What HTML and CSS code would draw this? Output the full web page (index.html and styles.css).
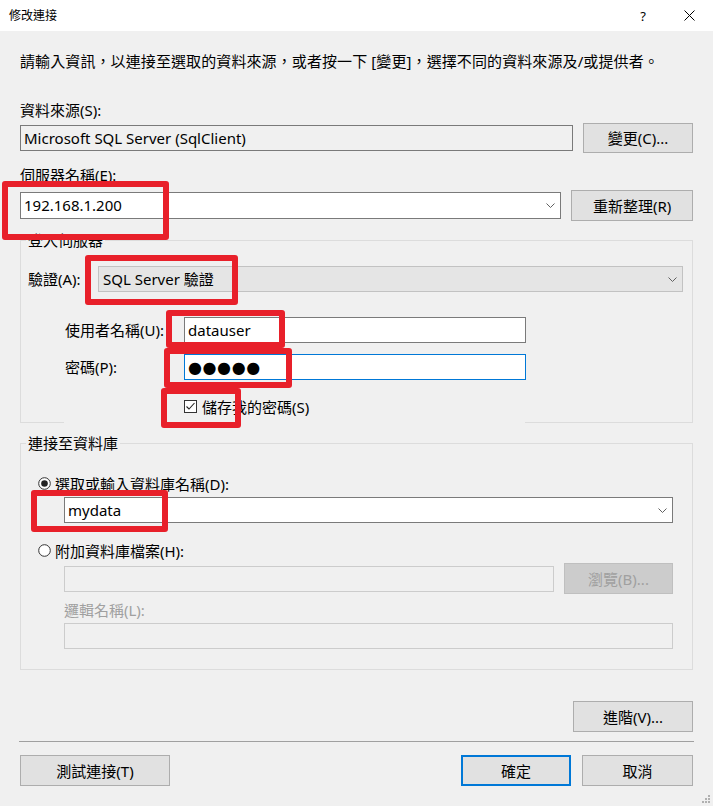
FILE: index.html
```html
<!DOCTYPE html>
<html lang="zh-Hant">
<head>
<meta charset="utf-8">
<title>修改連接</title>
<link rel="stylesheet" href="styles.css">
</head>
<body>
<div class="dialog">
  <header class="titlebar">
    <span class="title">修改連接</span>
    <div class="caption-btns">
      <span class="help">?</span>
      <svg class="close" width="11" height="11" viewBox="0 0 11 11"><path d="M0.5 0.5 L10.5 10.5 M10.5 0.5 L0.5 10.5" stroke="#000" stroke-width="1" fill="none"/></svg>
    </div>
  </header>

  <main class="content">
    <p class="intro">請輸入資訊，以連接至選取的資料來源，或者按一下 [變更]，選擇不同的資料來源及/或提供者。</p>

    <div class="label l-source">資料來源(S):</div>
    <div class="row r-source">
      <div class="textbox readonly w-source">Microsoft SQL Server (SqlClient)</div>
      <button class="btn btn-change">變更(C)...</button>
    </div>

    <div class="label l-server">伺服器名稱(E):</div>
    <div class="row r-server">
      <div class="combo w-server"><span class="val">192.168.1.200</span><svg class="chev" width="9" height="5" viewBox="0 0 9 5"><polyline points="0.5,0.5 4.5,4.5 8.5,0.5" fill="none" stroke="#606060" stroke-width="1"/></svg></div>
      <button class="btn btn-refresh">重新整理(R)</button>
    </div>

    <fieldset class="group g-login">
      <legend>登入伺服器</legend>
      <div class="auth-row">
        <span class="auth-label">驗證(A):</span>
        <div class="combo dropdown"><span class="val">SQL Server 驗證</span><svg class="chev" width="9" height="5" viewBox="0 0 9 5"><polyline points="0.5,0.5 4.5,4.5 8.5,0.5" fill="none" stroke="#606060" stroke-width="1"/></svg></div>
      </div>
      <div class="cred">
        <div class="cred-row r-user">
          <span class="cred-label">使用者名稱(U):</span>
          <div class="textbox cred-box">datauser</div>
        </div>
        <div class="cred-row r-pass">
          <span class="cred-label">密碼(P):</span>
          <div class="textbox cred-box focused"><span class="dots">●●●●●</span></div>
        </div>
        <div class="check">
          <svg class="checkbox" width="13" height="13" viewBox="0 0 13 13"><rect x="0.5" y="0.5" width="12" height="12" fill="#fff" stroke="#333" stroke-width="1"/><polyline points="2.5,6.5 5,9 10.5,3" fill="none" stroke="#222" stroke-width="1.1"/></svg>
          <span>儲存我的密碼(S)</span>
        </div>
      </div>
      <div class="group-foot"><span class="seg seg-left"></span><span class="seg-gap"></span><span class="seg seg-right"></span></div>
    </fieldset>

    <fieldset class="group g-db">
      <legend>連接至資料庫</legend>
      <div class="db-body">
        <div class="radio-row r-radio1">
          <svg class="radio" width="13" height="13" viewBox="0 0 13 13"><circle cx="6.5" cy="6.5" r="5.8" fill="#fff" stroke="#333" stroke-width="1"/><circle cx="6.5" cy="6.5" r="3.3" fill="#222"/></svg>
          <span>選取或輸入資料庫名稱(D):</span>
        </div>
        <div class="combo w-db"><span class="val">mydata</span><svg class="chev" width="9" height="5" viewBox="0 0 9 5"><polyline points="0.5,0.5 4.5,4.5 8.5,0.5" fill="none" stroke="#606060" stroke-width="1"/></svg></div>
        <div class="radio-row r-radio2">
          <svg class="radio" width="13" height="13" viewBox="0 0 13 13"><circle cx="6.5" cy="6.5" r="5.8" fill="#fff" stroke="#333" stroke-width="1"/></svg>
          <span>附加資料庫檔案(H):</span>
        </div>
        <div class="attach-row">
          <div class="textbox disabled w-attach"></div>
          <button class="btn btn-disabled btn-browse">瀏覽(B)...</button>
        </div>
        <div class="label disabled-label l-logical">邏輯名稱(L):</div>
        <div class="textbox disabled w-logical"></div>
      </div>
    </fieldset>

    <div class="adv-row"><button class="btn btn-adv">進階(V)...</button></div>
    <div class="separator"></div>
    <div class="footer">
      <button class="btn btn-test">測試連接(T)</button>
      <div class="footer-right">
        <button class="btn btn-ok">確定</button>
        <button class="btn btn-cancel">取消</button>
      </div>
    </div>
  </main>

  <svg class="grip" width="8" height="8" viewBox="0 0 8 8"><rect x="6" y="0" width="2" height="2" fill="#b0b0b0"/><rect x="3" y="3" width="2" height="2" fill="#b0b0b0"/><rect x="6" y="3" width="2" height="2" fill="#b0b0b0"/><rect x="0" y="6" width="2" height="2" fill="#b0b0b0"/><rect x="3" y="6" width="2" height="2" fill="#b0b0b0"/><rect x="6" y="6" width="2" height="2" fill="#b0b0b0"/></svg>

  <div class="mark mark-server"></div>
  <div class="mark mark-auth"></div>
  <div class="mark mark-user"></div>
  <div class="mark mark-pass"></div>
  <div class="mark mark-check"></div>
  <div class="mark mark-db"></div>
</div>
</body>
</html>
```

FILE: styles.css
```css
* { box-sizing: border-box; }
html, body { margin: 0; padding: 0; }
body {
  background: #f0f0f0;
  font-family: "Noto Sans", "Noto Sans CJK TC", sans-serif;
  font-size: 15px;
  color: #000;
}
.dialog {
  position: relative;
  width: 713px;
  height: 806px;
  background: #f0f0f0;
  overflow: hidden;
}
.titlebar {
  height: 31px;
  background: #fff;
  display: flex;
  align-items: center;
  justify-content: space-between;
  padding: 0 18px 0 9px;
}
.title { font-size: 12px; line-height: 16px; }
.caption-btns { display: flex; align-items: center; gap: 38px; }
.help { font-size: 13px; line-height: 16px; }
.close { display: block; }

.content { padding: 0 20px; }
.intro {
  margin: 20px 0 0;
  line-height: 20px;
  white-space: nowrap;
  letter-spacing: 0.1px;
}
.label { line-height: 20px; }
.l-source { margin-top: 29px; }
.l-server { margin-top: 12px; }
.row { display: flex; align-items: center; gap: 10px; }
.r-source { margin-top: 3px; height: 30px; }
.r-server { margin-top: 5px; height: 31px; }

.textbox {
  height: 26px;
  background: #fff;
  border: 1px solid #7a7a7a;
  padding: 0 3px;
  line-height: 24px;
  white-space: nowrap;
  overflow: hidden;
}
.textbox.readonly { background: #f0f0f0; }
.textbox.disabled { background: #f0f0f0; border-color: #cccccc; }
.textbox.focused { border-color: #0078d7; }
.w-source { width: 553px; }

.combo {
  height: 27px;
  background: #fff;
  border: 1px solid #7a7a7a;
  display: flex;
  align-items: center;
  justify-content: space-between;
  padding: 0 5px 0 3px;
  line-height: 25px;
}
.combo .chev { display: block; }
.w-server { width: 542px; }
.combo.dropdown {
  flex: 1;
  height: 26px;
  background: #e5e5e5;
  border-color: #c2c2c2;
  padding-left: 4px;
}

.btn {
  font-family: inherit;
  font-size: 15px;
  color: #000;
  background: #e1e1e1;
  border: 1px solid #adadad;
  border-radius: 0;
  padding: 0;
  line-height: 20px;
  height: 31px;
}
.btn-change { width: 110px; height: 30px; }
.btn-refresh { width: 122px; }
.btn-disabled { background: #cccccc; border-color: #bfbfbf; color: #a0a0a0; }

.group {
  margin: 0;
  padding: 0;
  border: 1px solid #dcdcdc;
  min-width: 0;
}
.group legend {
  padding: 0 2px;
  margin-left: 5px;
  line-height: 20px;
}
.g-login { margin-top: 9px; border-bottom: 0; }
.auth-row {
  display: flex;
  align-items: center;
  margin-top: 16px;
  padding: 0 9px 0 7px;
}
.auth-label { width: 70px; line-height: 20px; }
.cred { padding-left: 44px; }
.cred-row { display: flex; align-items: center; }
.r-user { margin-top: 25px; }
.r-pass { margin-top: 11px; }
.cred-label { width: 119px; line-height: 20px; }
.cred-box { width: 342px; }
.dots {
  font-family: "DejaVu Sans", sans-serif;
  font-size: 16px;
  letter-spacing: 0.6px;
  line-height: 24px;
}
.check {
  display: flex;
  align-items: center;
  gap: 5px;
  margin: 16px 0 0 119px;
  height: 20px;
}
.checkbox { display: block; }
.group-foot { display: flex; height: 1px; margin-top: 6px; }
.seg { height: 1px; background: #dcdcdc; }
.seg-left { width: 43px; }
.seg-gap { width: 461px; }
.seg-right { flex: 1; }

.g-db { margin-top: 10px; }
.db-body { padding: 0 19px 20px 43px; }
.radio-row {
  display: flex;
  align-items: center;
  gap: 4px;
  height: 20px;
  margin-left: -26px;
}
.radio { display: block; }
.r-radio1 { margin-top: 20px; }
.r-radio2 { margin-top: 17px; }
.w-db { margin-top: 4px; height: 26px; }
.attach-row { display: flex; align-items: center; gap: 10px; margin-top: 3px; height: 31px; }
.w-attach { flex: 1; }
.btn-browse { width: 109px; }
.disabled-label { color: #a0a0a0; }
.l-logical { margin-top: 6px; }
.w-logical { margin-top: 3px; }

.adv-row { display: flex; justify-content: flex-end; margin-top: 31px; }
.btn-adv { width: 120px; }
.separator { height: 1px; background: #a0a0a0; margin: 9px -1px 0; }
.footer { display: flex; justify-content: space-between; margin-top: 13px; }
.footer-right { display: flex; gap: 11px; }
.btn-test { width: 150px; }
.btn-ok { width: 110px; border: 2px solid #0078d7; }
.btn-cancel { width: 111px; }

.grip { position: absolute; right: 3px; bottom: 3px; }

/* red annotation marks drawn over the screenshot */
.mark {
  position: absolute;
  border: 6px solid #e8202a;
  border-radius: 3px;
}
.mark-server { left: 2px; top: 181px; width: 167px; height: 59px; }
.mark-auth { left: 85px; top: 255px; width: 153px; height: 50px; }
.mark-user { left: 166px; top: 310px; width: 119px; height: 38px; }
.mark-pass { left: 164px; top: 348px; width: 128px; height: 40px; }
.mark-check { left: 161px; top: 388px; width: 80px; height: 40px; }
.mark-db { left: 31px; top: 490px; width: 137px; height: 42px; }
```
